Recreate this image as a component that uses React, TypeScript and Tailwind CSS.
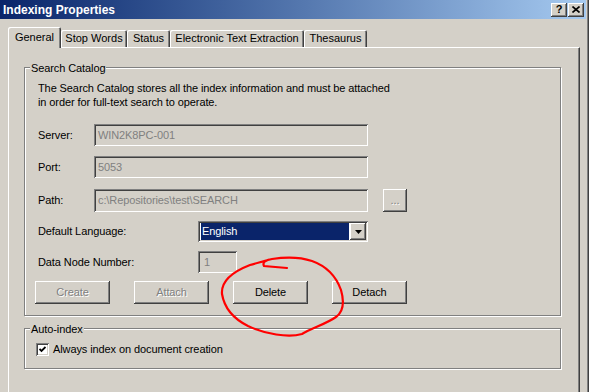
import React from 'react';

const raised =
    'shadow-[inset_-1px_-1px_0_#404040,inset_1px_1px_0_#ffffff,inset_-2px_-2px_0_#808080,inset_2px_2px_0_#d4d0c8]';
const sunken =
    'shadow-[inset_1px_1px_0_#808080,inset_-1px_-1px_0_#ffffff,inset_2px_2px_0_#404040,inset_-2px_-2px_0_#d4d0c8]';
const etched = 'border border-[#808080] shadow-[1px_1px_0_#ffffff,inset_1px_1px_0_#ffffff]';
const disabledText = 'text-[#808080] [text-shadow:1px_1px_0_#ffffff]';

const tabs = [
    { label: 'General', w: 'w-[53px]', active: true },
    { label: 'Stop Words', w: 'w-[66px]' },
    { label: 'Status', w: 'w-[43px]' },
    { label: 'Electronic Text Extraction', w: 'w-[134px]' },
    { label: 'Thesaurus', w: 'w-[63px]' },
];

const GroupBox: React.FC<{ title: string; className: string; children: React.ReactNode }> = ({
    title,
    className,
    children,
}) => (
    <div className={`relative ${etched} ${className}`}>
        <span className="absolute left-[5px] top-[-7px] leading-[14px] bg-[#d4d0c8] px-[1px]">{title}</span>
        {children}
    </div>
);

const Field: React.FC<{ value: string; className: string }> = ({ value, className }) => (
    <div className={`${sunken} ${className} flex items-center pl-[4px] text-[#808080] whitespace-nowrap`}>
        {value}
    </div>
);

const Button: React.FC<{ label: string; disabled?: boolean }> = ({ label, disabled }) => (
    <div
        className={`${raised} w-[75px] h-[23px] flex items-center justify-center ${disabled ? disabledText : 'text-black'}`}
    >
        {label}
    </div>
);

export default function App() {
    return (
        <div className="relative w-[600px] h-[392px] overflow-hidden bg-white font-['Liberation_Sans',Arial,sans-serif] text-[11px] text-black">
            <div className="w-[589px] h-full bg-[#d4d0c8] border-r border-[#404040]">
                <div className="h-full border-r border-[#808080] flex flex-col">
                    {/* Title bar */}
                    <div className="h-[19px] w-[586px] shrink-0 flex items-center bg-linear-to-r from-[#0a246a] to-[#a6caf0]">
                        <span className="pl-[3px] text-white font-bold text-[12px] leading-none">
                            Indexing Properties
                        </span>
                        <div className="ml-auto flex gap-[1px] pr-[2px]">
                            <div className={`${raised} bg-[#d4d0c8] w-[16px] h-[14px] flex items-center justify-center font-bold text-[11px] leading-none`}>
                                ?
                            </div>
                            <div className={`${raised} bg-[#d4d0c8] w-[16px] h-[14px] flex items-center justify-center`}>
                                <svg width="8" height="7" viewBox="0 0 8 7">
                                    <path d="M0.5 0.5 L7.5 6.5 M7.5 0.5 L0.5 6.5" stroke="#000" strokeWidth="1.6" />
                                </svg>
                            </div>
                        </div>
                    </div>

                    {/* Tabs */}
                    <div className="h-[28px] shrink-0 pl-[8px] flex items-end">
                        {tabs.map((t) => (
                            <div
                                key={t.label}
                                className={`${t.w} flex items-center justify-center rounded-t-[2px] bg-[#d4d0c8] whitespace-nowrap shadow-[inset_1px_1px_0_#ffffff,inset_-1px_0_0_#404040,inset_-2px_0_0_#808080] ${
                                    t.active ? 'relative z-10 h-[21px] -mb-[1px]' : 'h-[17px]'
                                }`}
                            >
                                {t.label}
                            </div>
                        ))}
                    </div>

                    {/* Tab page */}
                    <div className="ml-[8px] w-[572px] flex-1 border-t border-l border-white border-r border-r-[#404040] shadow-[inset_-1px_0_0_#808080] pl-[15px] pt-[19px] tracking-[-0.1px]">
                        <GroupBox title="Search Catalog" className="w-[537px] h-[249px]">
                            <div className="pl-[13px] pt-[13px] flex flex-col">
                                <p className="leading-[14px]">
                                    The Search Catalog stores all the index information and must be attached
                                    <br />
                                    in order for full-text search to operate.
                                </p>

                                <div className="mt-[15px] flex items-center h-[22px]">
                                    <span className="w-[56px]">Server:</span>
                                    <Field value="WIN2K8PC-001" className="w-[274px] h-[22px]" />
                                </div>

                                <div className="mt-[10px] flex items-center h-[22px]">
                                    <span className="w-[56px]">Port:</span>
                                    <Field value="5053" className="w-[274px] h-[22px]" />
                                </div>

                                <div className="mt-[11px] flex items-center h-[23px]">
                                    <span className="w-[56px]">Path:</span>
                                    <Field value="c:\Repositories\test\SEARCH" className="w-[274px] h-[23px]" />
                                    <div className={`${raised} ml-[15px] w-[24px] h-[23px] flex items-center justify-center ${disabledText}`}>
                                        ...
                                    </div>
                                </div>

                                <div className="mt-[9px] flex items-center h-[21px]">
                                    <span className="w-[160px]">Default Language:</span>
                                    <div className={`${sunken} w-[170px] h-[21px] p-[2px] flex bg-white`}>
                                        <div className="flex-1 ml-[1px] bg-[#0a246a] text-white flex items-center pl-[1px]">
                                            English
                                        </div>
                                        <div className={`${raised} ml-[1px] w-[16px] bg-[#d4d0c8] flex items-center justify-center`}>
                                            <svg width="7" height="4" viewBox="0 0 7 4">
                                                <path d="M0 0 H7 L3.5 4 Z" fill="#000" />
                                            </svg>
                                        </div>
                                    </div>
                                </div>

                                <div className="mt-[9px] flex items-center h-[22px]">
                                    <span className="w-[160px]">Data Node Number:</span>
                                    <Field value="1" className="w-[39px] h-[22px] pl-[6px]" />
                                </div>

                                <div className="mt-[8px] -ml-[3px] flex gap-[24px]">
                                    <Button label="Create" disabled />
                                    <Button label="Attach" disabled />
                                    <Button label="Delete" />
                                    <Button label="Detach" />
                                </div>
                            </div>
                        </GroupBox>

                        <GroupBox title="Auto-index" className="mt-[12px] w-[537px] h-[41px]">
                            <div className="pl-[11px] pt-[14px] flex items-center">
                                <div className={`${sunken} w-[13px] h-[13px] bg-white flex items-center justify-center`}>
                                    <svg width="7" height="7" viewBox="0 0 7 7">
                                        <path d="M0.5 3 L2.5 5 L6.5 1" stroke="#000" strokeWidth="1.8" fill="none" />
                                    </svg>
                                </div>
                                <span className="ml-[4px] leading-[13px]">Always index on document creation</span>
                            </div>
                        </GroupBox>
                    </div>
                </div>
            </div>

            {/* red annotation around Delete */}
            <svg className="absolute inset-0 pointer-events-none" width="600" height="392" viewBox="0 0 600 392">
                <path
                    d="M287 268 L264 266 C262 262 266 260 272 259 C285 257 300 257 312 261 C326 266 336 276 341 290 C345 304 343 312 336 317 C326 324 312 328 302 334 C288 338 265 334 248 326 C232 318 224 306 222 294 C221 282 232 272 250 265 C256 263 262 262 268 260"
                    stroke="#ff0000"
                    strokeWidth="2.2"
                    fill="none"
                    strokeLinecap="round"
                />
            </svg>
        </div>
    );
}
